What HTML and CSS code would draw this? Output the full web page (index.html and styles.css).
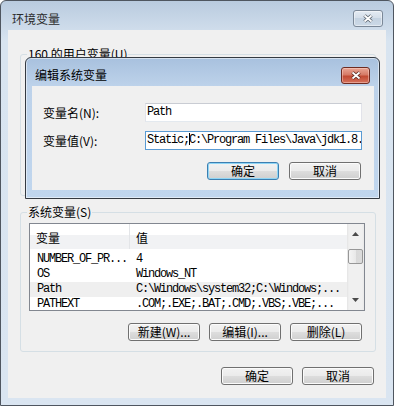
FILE: index.html
```html
<!DOCTYPE html>
<html lang="zh-CN">
<head>
<meta charset="utf-8">
<title>环境变量</title>
<link rel="stylesheet" href="styles.css">
</head>
<body>
<div class="win">
  <div class="titlebar">
    <span class="title">环境变量</span>
    <span class="closebtn inactive">
      <svg width="12" height="9" viewBox="0 0 12 9"><path d="M2.5 1.5L9.5 7.5M9.5 1.5L2.5 7.5" stroke="#5b6470" stroke-width="3.6"/><path d="M2.5 1.5L9.5 7.5M9.5 1.5L2.5 7.5" stroke="#fff" stroke-width="1.8"/></svg>
    </span>
  </div>
  <div class="client">
    <fieldset class="group user">
      <legend>160 的用户变量(U)</legend>
      <div class="user-body"></div>
    </fieldset>
    <fieldset class="group sys">
      <legend>系统变量(S)</legend>
      <div class="list">
        <div class="list-main">
          <div class="lhead"><span class="c1">变量</span><span class="c2">值</span></div>
          <div class="rows">
            <div class="lrow"><span class="c1 mono">NUMBER_OF_PR...</span><span class="c2 mono">4</span></div>
            <div class="lrow"><span class="c1 mono">OS</span><span class="c2 mono">Windows_NT</span></div>
            <div class="lrow sel"><span class="c1 mono">Path</span><span class="c2 mono">C:\Windows\system32;C:\Windows;...</span></div>
            <div class="lrow"><span class="c1 mono">PATHEXT</span><span class="c2 mono">.COM;.EXE;.BAT;.CMD;.VBS;.VBE;...</span></div>
          </div>
        </div>
        <div class="vscroll">
          <div class="sbtn"><svg width="7" height="4" viewBox="0 0 7 4"><path d="M3.5 0L7 4H0z" fill="#4a4a4a"/></svg></div>
          <div class="track"><div class="thumb"></div></div>
          <div class="sbtn"><svg width="7" height="4" viewBox="0 0 7 4"><path d="M0 0H7L3.5 4z" fill="#4a4a4a"/></svg></div>
        </div>
      </div>
      <div class="btnrow sysbtns">
        <button class="btn">新建(W)...</button>
        <button class="btn">编辑(I)...</button>
        <button class="btn">删除(L)</button>
      </div>
    </fieldset>
    <div class="btnrow bottom">
      <button class="btn">确定</button>
      <button class="btn">取消</button>
    </div>
  </div>

  <div class="dlg">
    <div class="dtitlebar">
      <span class="dtitle">编辑系统变量</span>
      <span class="closebtn red">
        <svg width="12" height="9" viewBox="0 0 12 9"><path d="M2.5 1.5L9.5 7.5M9.5 1.5L2.5 7.5" stroke="#5a2a22" stroke-width="3.6"/><path d="M2.5 1.5L9.5 7.5M9.5 1.5L2.5 7.5" stroke="#fff" stroke-width="1.8"/></svg>
      </span>
    </div>
    <div class="dclient">
      <div class="frow">
        <span class="flabel">变量名(N):</span>
        <div class="field mono">Path</div>
      </div>
      <div class="frow">
        <span class="flabel">变量值(V):</span>
        <div class="field focus mono">Static;<span class="caret"></span>C:\Program Files\Java\jdk1.8.</div>
      </div>
      <div class="btnrow dbtns">
        <button class="btn default">确定</button>
        <button class="btn">取消</button>
      </div>
    </div>
  </div>
</div>
</body>
</html>
```

FILE: styles.css
```css
html, body {
  margin: 0;
  padding: 0;
}
body {
  width: 394px;
  height: 406px;
  overflow: hidden;
  font-family: "Noto Sans CJK SC", "Liberation Sans", sans-serif;
  font-size: 12px;
  color: #000;
  background: #fff;
}
.mono {
  font-family: "Liberation Mono", "Noto Sans CJK SC", monospace;
  font-size: 12px;
  letter-spacing: -1.2px;
}
.win {
  position: relative;
  box-sizing: border-box;
  width: 394px;
  height: 406px;
  border: 1px solid #4f5660;
  border-radius: 6px 6px 0 0;
  background: linear-gradient(#b9cbdf 0, #cddbea 26px, #d8e4f0 40px, #dae5f1 100%);
  padding: 0 7px 7px;
  display: flex;
  flex-direction: column;
}
.titlebar {
  height: 29px;
  flex: none;
  display: flex;
  justify-content: space-between;
  align-items: flex-start;
}
.title {
  padding: 9px 0 0 4px;
  line-height: 18px;
  color: #2b2b2b;
}
.closebtn {
  box-sizing: border-box;
  display: flex;
  align-items: center;
  justify-content: center;
  border-radius: 3px;
}
.closebtn.inactive {
  margin: 9px 3px 0 0;
  width: 30px;
  height: 17px;
  border: 1px solid #7b8898;
  background: linear-gradient(#e4ebf3, #d3dde9 50%, #c4d2e1 50%, #ccd9e7);
  box-shadow: inset 0 0 0 1px rgba(255,255,255,.45);
}
.closebtn.red {
  margin: 9px 4px 0 0;
  width: 29px;
  height: 17px;
  border: 1px solid #6e2b21;
  background: linear-gradient(#e9a695, #d67a66 45%, #c24a33 55%, #d6725c);
  box-shadow: inset 0 0 0 1px rgba(255,220,210,.45);
}
.client {
  flex: 1;
  background: #f0f0f0;
  display: flex;
  flex-direction: column;
  padding: 16px 10px 13px 12px;
}
fieldset.group {
  margin: 0;
  min-width: 0;
  border: 1px solid #d5dfe5;
  border-radius: 3px;
  padding: 0 10px 0 8px;
}
fieldset.group legend {
  padding: 0 1px;
  margin-left: -2px;
  height: 16px;
  line-height: 16px;
}
.user-body {
  height: 133px;
}
fieldset.sys {
  margin-top: 8px;
  padding: 3px 10px 10px 8px;
}
.list {
  box-sizing: border-box;
  height: 88px;
  border: 1px solid #828790;
  background: #fff;
  display: flex;
  overflow: hidden;
}
.list-main {
  flex: 1;
  overflow: hidden;
}
.lhead {
  height: 25px;
  display: flex;
  background: linear-gradient(#fff 0, #fff 11px, #f1f2f4 11px, #f1f2f4 100%);
}
.lhead .c1 {
  box-sizing: border-box;
  width: 100px;
  padding: 4px 0 0 6px;
  line-height: 20px;
  border-right: 1px solid #e3e5e8;
}
.lhead .c2 {
  padding: 4px 0 0 6px;
  line-height: 20px;
}
.rows {
  padding-top: 3px;
}
.lrow {
  height: 15px;
  line-height: 15px;
  display: flex;
  white-space: nowrap;
}
.lrow.sel {
  background: #efefef;
}
.lrow .c1 {
  box-sizing: border-box;
  width: 100px;
  padding-left: 7px;
}
.lrow .c2 {
  padding-left: 6px;
}
.vscroll {
  width: 17px;
  flex: none;
  display: flex;
  flex-direction: column;
  background: linear-gradient(90deg, #e4e4e4, #f0f0f0 2px, #f0f0f0 15px, #e9e9e9);
}
.sbtn {
  height: 20px;
  flex: none;
  display: flex;
  align-items: center;
  justify-content: center;
}
.track {
  flex: 1;
  padding-top: 5px;
}
.thumb {
  box-sizing: border-box;
  width: 15px;
  height: 15px;
  margin-left: 1px;
  border: 1px solid #979797;
  border-radius: 2px;
  background: linear-gradient(90deg, #f4f4f4, #e9e9e9 50%, #d8d8d8 50%, #dcdcdc);
}
.btnrow {
  display: flex;
  justify-content: flex-end;
  gap: 9px;
}
.sysbtns {
  margin-top: 12px;
  margin-right: 3px;
}
.bottom {
  margin-top: 15px;
  margin-right: 2px;
}
.btn {
  box-sizing: border-box;
  width: 72px;
  height: 18px;
  padding: 0;
  margin: 0;
  border: 1px solid #707070;
  border-radius: 3px;
  background: linear-gradient(#f2f2f2, #ebebeb 48%, #dddddd 52%, #cfcfcf);
  box-shadow: inset 0 0 0 1px #fbfbfb;
  font-family: "Noto Sans CJK SC", "Liberation Sans", sans-serif;
  font-size: 12px;
  line-height: 16px;
  color: #000;
  display: flex;
  align-items: center;
  justify-content: center;
}
.btn.default {
  border-color: #3c7fb1;
  box-shadow: inset 0 0 0 1px #8fd5f5;
}
.dlg {
  position: absolute;
  left: 24px;
  top: 56px;
  width: 355px;
  height: 142px;
  box-sizing: border-box;
  border: 1px solid #343a42;
  border-radius: 6px 6px 0 0;
  background: linear-gradient(#a8c1de 0, #bdd2ea 28px, #c0d6ee 100%);
  box-shadow: inset 0 0 0 1px rgba(255,255,255,.5);
  padding: 0 5px 8px 6px;
  display: flex;
  flex-direction: column;
}
.dtitlebar {
  height: 28px;
  flex: none;
  display: flex;
  justify-content: space-between;
  align-items: flex-start;
}
.dtitle {
  padding: 8px 0 0 3px;
  line-height: 18px;
  color: #000;
}
.dclient {
  flex: 1;
  background: #f0f0f0;
  padding: 17px 13px 0 11px;
}
.frow {
  display: flex;
  align-items: center;
  height: 19px;
}
.frow + .frow {
  margin-top: 9px;
}
.flabel {
  width: 102px;
  flex: none;
  line-height: 19px;
}
.field {
  flex: none;
  box-sizing: border-box;
  width: 217px;
  height: 19px;
  border: 1px solid;
  border-color: #c9ccd3 #e2e3ea #e3e9ef;
  background: #fff;
  padding-left: 1px;
  line-height: 17px;
  white-space: nowrap;
  overflow: hidden;
}
.field.focus {
  border-color: #5a9bd3;
}
.caret {
  display: inline-block;
  width: 1px;
  height: 12px;
  margin-right: -1px;
  background: #000;
  vertical-align: -2px;
}
.dbtns {
  margin-top: 12px;
  gap: 10px;
}
```
